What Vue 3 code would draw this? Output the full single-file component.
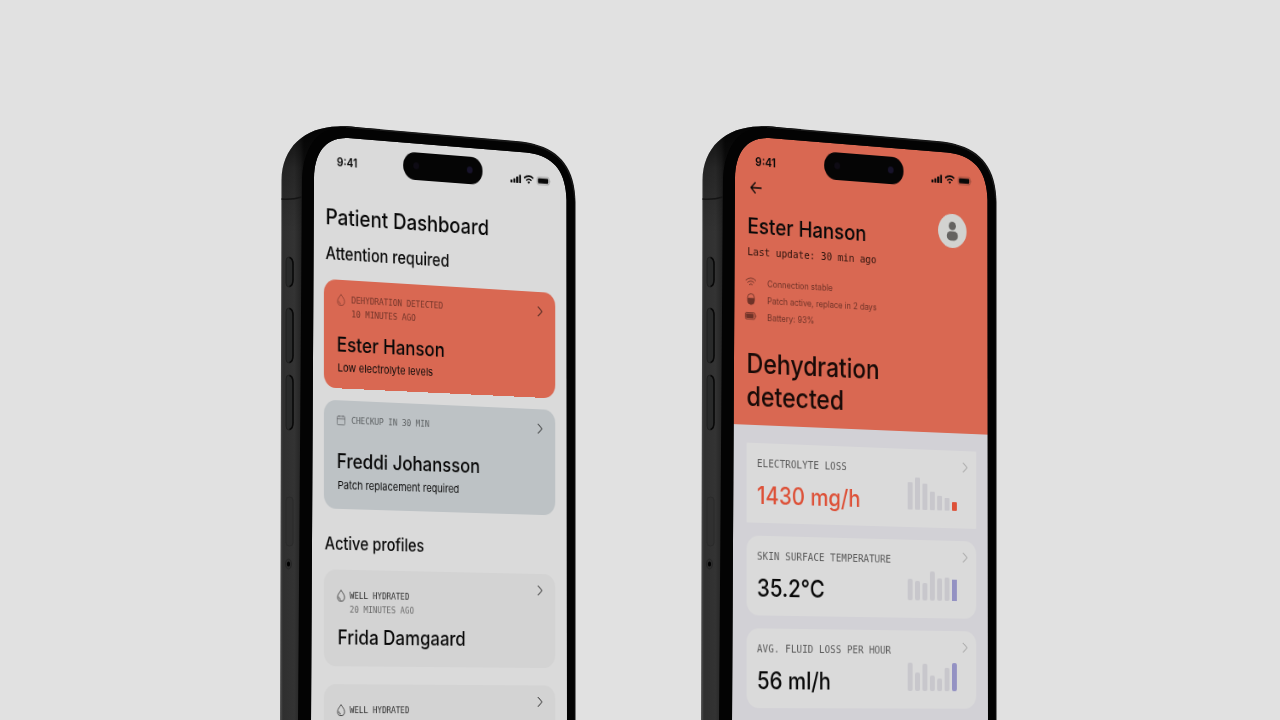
<script setup>
const profiles = {
  attention: [
    { kind: 'alert', icon: 'drop', label: 'DEHYDRATION DETECTED', time: '10 MINUTES AGO', name: 'Ester Hanson', note: 'Low electrolyte levels' },
    { kind: 'checkup', icon: 'calendar', label: 'CHECKUP IN 30 MIN', name: 'Freddi Johansson', note: 'Patch replacement required' }
  ],
  active: [
    { kind: 'calm', icon: 'drop', label: 'WELL HYDRATED', time: '20 MINUTES AGO', name: 'Frida Damgaard' },
    { kind: 'calm', icon: 'drop', label: 'WELL HYDRATED', time: '20 MINUTES AGO' }
  ]
}
const sections = [
  { title: 'Attention required', key: 'attention', items: profiles.attention },
  { title: 'Active profiles', key: 'active', items: profiles.active }
]
const metrics = [
  { label: 'ELECTROLYTE LOSS', value: '1430 mg/h', tone: 'warn', bars: [28, 33, 27, 19, 15, 13, 9] },
  { label: 'SKIN SURFACE TEMPERATURE', value: '35.2°C', tone: 'cool', bars: [22, 20, 18, 30, 23, 24, 22] },
  { label: 'AVG. FLUID LOSS PER HOUR', value: '56 ml/h', tone: 'cool round', bars: [29, 19, 28, 16, 13, 24, 29] }
]
const phones = ['dashboard', 'patient']
</script>

<template>
  <main class="stage">
    <section v-for="phone in phones" :key="phone" class="phone">
      <div class="screen" :class="phone">
        <div class="status-bar">
          <span class="clock">9:41</span>
          <span class="island"><i class="lens"></i><i class="lens bright"></i></span>
          <svg class="signals" viewBox="0 0 50 12" aria-hidden="true">
            <rect x="0" y="7" width="2.4" height="3" rx=".6" /><rect x="3.5" y="5.5" width="2.4" height="4.5" rx=".6" />
            <rect x="7" y="3.5" width="2.4" height="6.5" rx=".6" /><rect x="10.5" y="1.5" width="2.4" height="8.5" rx=".6" />
            <g fill="none" stroke="currentColor" stroke-width="1.6">
              <path d="M17 4.4a7.6 7.6 0 0 1 10.8 0" /><path d="M19.2 6.7a4.6 4.6 0 0 1 6.4 0" />
            </g>
            <path d="M20.7 8.3a2.6 2.6 0 0 1 3.4 0L22.4 10.200z" />
            <rect x="32.5" y="2.2" width="15" height="7.8" rx="2.2" fill="none" stroke="currentColor" stroke-width=".6" opacity=".4" />
            <rect x="33.7" y="3.4" width="12.6" height="5.4" rx="1.2" /><path d="M48.3 4.8q1.4 1.3 0 2.600z" opacity=".4" />
          </svg>
        </div>

        <div v-if="phone === 'dashboard'" class="dashboard-body">
          <h1>Patient Dashboard</h1>
          <section v-for="s in sections" :key="s.key" class="group" :class="s.key">
            <h2>{{ s.title }}</h2>
            <div class="list">
              <a v-for="(p, i) in s.items" :key="i" href="#" class="profile" :class="p.kind">
                <svg v-if="p.icon === 'drop'" class="tag-icon" viewBox="0 0 10 12" aria-hidden="true">
                  <path d="M5 .6C3.6 2.8 .9 5 .9 7.5a4.1 4.1 0 0 0 8.2 0C9.1 5 6.4 2.8 5 .6z" />
                  <path d="M2.6 7.4c0 1.4.8 2.3 2.1 2.5" />
                </svg>
                <svg v-else class="tag-icon" viewBox="0 0 10 12" aria-hidden="true">
                  <rect x=".5" y="2" width="9" height="8.5" rx="1" /><path d="M.5 4.6h9M2.8 1v2M7.2 1v2" />
                </svg>
                <span class="tag">{{ p.label }}</span>
                <svg class="chevron" viewBox="0 0 8 12" aria-hidden="true"><path d="M1.6 1l5 5-5 5" /></svg>
                <span v-if="p.time" class="time">{{ p.time }}</span>
                <strong v-if="p.name">{{ p.name }}</strong>
                <span v-if="p.note" class="note">{{ p.note }}</span>
              </a>
            </div>
          </section>
        </div>

        <template v-else>
          <header class="hero">
            <button class="back" type="button" aria-label="Back">
              <svg viewBox="0 0 14 12"><path d="M13.5 6H1.5M6.5 .6l-5.4 5.4 5.4 5.4" /></svg>
            </button>
            <div class="identity">
              <div>
                <h1>Ester Hanson</h1>
                <p class="updated">Last update: 30 min ago</p>
              </div>
              <svg class="avatar" viewBox="0 0 35 35" aria-hidden="true">
                <circle cx="17.5" cy="17.5" r="17.5" fill="#d2d2d0" />
                <circle cx="17.5" cy="12.4" r="4.4" fill="#656361" />
                <rect x="10.8" y="18" width="13.4" height="9.4" rx="4.5" fill="#656361" />
              </svg>
            </div>
            <ul class="facts">
              <li>
                <svg viewBox="0 0 14 12"><g class="line"><path d="M1 4.4a8.5 8.5 0 0 1 12 0" /><path d="M3 6.6a5.6 5.6 0 0 1 8 0" /><path d="M5 8.7a2.9 2.9 0 0 1 4 0" /></g></svg>
                Connection stable
              </li>
              <li>
                <svg viewBox="0 0 14 12"><rect class="line" x="3.3" y=".6" width="7.8" height="10.6" rx="3.7" /><path d="M3.3 4.8h7.8v2.7a3.9 3.7 0 0 1-7.8 0z" /></svg>
                Patch active, replace in 2 days
              </li>
              <li>
                <svg viewBox="0 0 14 12"><rect class="line" x=".4" y="2.6" width="11.6" height="6.4" rx="1.6" /><rect x="1.3" y="3.5" width="9" height="4.6" rx=".8" /><path d="M12.6 4.4q1.6 1.4 0 2.8z" /></svg>
                Battery: 93%
              </li>
            </ul>
            <p class="headline">Dehydration<br />detected</p>
          </header>
          <div class="metrics">
            <a v-for="m in metrics" :key="m.label" href="#" class="metric" :class="m.tone">
              <span class="metric-label">{{ m.label }}</span>
              <svg class="chevron" viewBox="0 0 8 12" aria-hidden="true"><path d="M1.6 1l5 5-5 5" /></svg>
              <strong>{{ m.value }}</strong>
              <span class="chart"><i v-for="(h, i) in m.bars" :key="i" :style="{ height: h + 'px' }"></i></span>
            </a>
          </div>
        </template>
      </div>

      <svg class="frame" viewBox="0 0 299 596" preserveAspectRatio="xMinYMin slice" aria-hidden="true">
        <defs>
          <linearGradient :id="'side-' + phone" x1="0" x2="24" y1="0" y2="0" gradientUnits="userSpaceOnUse">
            <stop offset="0" stop-color="#555" /><stop offset=".12" stop-color="#2f2f2f" />
            <stop offset=".6" stop-color="#333" /><stop offset=".85" stop-color="#252525" /><stop offset="1" stop-color="#111" />
          </linearGradient>
          <linearGradient :id="'shade-' + phone" x1="0" x2="0" y1="0" y2="110" gradientUnits="userSpaceOnUse">
            <stop offset="0" stop-color="#000" stop-opacity=".8" /><stop offset=".4" stop-color="#000" stop-opacity=".25" />
            <stop offset="1" stop-color="#000" stop-opacity="0" />
          </linearGradient>
        </defs>
        <g fill-rule="evenodd">
          <path :fill="'url(#side-' + phone + ')'" d="M0 600L1.5 56C2 24 24 3 58 2.5C64 2 72 2.5 80 3.5L236 17C274 20 295 38 295.5 78L295.5 600zM31 600L34 54C34.5 28 46 13 68 14L246 28.5C272 31 286 46 286.5 76L287 600z" />
          <path :fill="'url(#shade-' + phone + ')'" d="M1 110L1.5 56C2 24 24 3 58 2.5C64 2 72 2.5 80 3.5L100 5V14L68 14C46 13 34.5 28 34 54L34 110z" />
          <path fill="#030303" d="M18 600L22 56C23 26 36 4 60 4L80 5L236 19C272 22 294 38 294.5 78L294.5 600zM31 600L34 54C34.5 28 46 13 68 14L246 28.5C272 31 286 46 286.5 76L287 600z" />
        </g>
        <path d="M66 3.2L236 18C272 21 292 38 294.5 74" fill="none" stroke="#1b1b1b" stroke-width="1" />
        <path d="M1.5 75q10 1 20.500-2" stroke="#151515" stroke-width="1.5" fill="none" />
        <g fill="#292a2a" stroke="#1b1b1b" stroke-width=".7">
          <path d="M6 137q0-4 3-4 4 0 4 7v16q0 7-4 7-3 0-3-4z" />
          <path d="M6 188q0-4 3-4 4 0 4 7v41q0 7-4 7-3 0-3-4z" />
          <path d="M6 255q0-4 3-4 4 0 4 7v41q0 7-4 7-3 0-3-4z" />
        </g>
        <g fill="none" stroke="#080808" stroke-width="1.5">
          <path d="M9.5 133.5q3.5 1 3.5 7v15q0 6-3.5 7" /><path d="M9.5 184.5q3.5 1 3.5 7v40q0 6-3.5 7" /><path d="M9.5 251.5q3.5 1 3.5 7v40q0 6-3.5 7" />
        </g>
        <rect x="6" y="373" width="7" height="49" rx="3.5" fill="#303030" stroke="#2b2b2b" />
        <ellipse cx="8.5" cy="440" rx="3" ry="5" fill="#2d2d2d" stroke="#242424" stroke-width=".7" /><ellipse cx="8.5" cy="440" rx="1.6" ry="2.6" fill="#000" />
      </svg>
    </section>
  </main>
</template>

<style>
body { margin: 0; background: #e1e1e1; }
</style>

<style scoped>
* { box-sizing: border-box; }
h1, h2, p, ul { margin: 0; padding: 0; font-weight: 500; }
a { color: inherit; text-decoration: none; }
.stage {
  display: flex;
  justify-content: center;
  gap: 122px;
  height: 100vh;
  padding-top: 124px;
  overflow: hidden;
  background: #e1e1e1;
  color: #080808;
  font-family: Inter, "Liberation Sans", sans-serif;
}
.phone { position: relative; flex: 0 0 299px; padding-top: 8px; overflow: hidden; }
.frame { position: absolute; inset: 0; width: 100%; height: 100%; pointer-events: none; }

/* The display recedes to the right, seen from the level of its lower edge. */
.screen {
  width: 314px;
  height: 100%;
  margin-left: 30px;
  overflow: hidden;
  border-radius: 50px 50px 0 0;
  background: #dadada;
  transform-origin: 0 598px;
  transform: perspective(4250px) rotateY(30deg);
}
.screen.patient { background: #d2d1d6; }
.screen.patient .status-bar { background: #d96852; }
.screen.patient .clock { padding-left: 28px; }

.status-bar {
  display: grid;
  grid-template-columns: 109px 95px 1fr;
  align-items: center;
  height: 42px;
  padding-top: 9px;
}
.clock { padding: 5px 0 0 31px; font-size: 12px; font-weight: 600; line-height: 16px; }
.island {
  display: flex;
  justify-content: space-between;
  align-items: center;
  height: 28px;
  padding: 0 12px;
  border-radius: 14px;
  background: #050505;
}
.lens { width: 7px; height: 7px; border-radius: 50%; background: #0e0b14; }
.lens.bright { background: #17132a; }
.signals { width: 50px; height: 12px; margin: 10px 0 0 34px; fill: currentColor; }

.tag-icon, .chevron { fill: none; stroke: currentColor; }
.chevron { width: 8px; height: 12px; margin-top: 1px; stroke-width: 1; }

.dashboard-body { padding: 27px 21px 0 16px; }
.dashboard-body h1 { padding-left: 2px; font-size: 22px; line-height: 28px; }
.dashboard-body h2 { margin-bottom: 14px; padding-left: 2px; font-size: 17px; line-height: 24px; }
.group { margin-top: 11px; }
.group.active { margin-top: 23px; }
.active h2 { padding-left: 1px; }
.list { display: grid; gap: 12px; }
.active .list { gap: 18px; }
.profile {
  display: grid;
  grid-template-columns: 10px 1fr 8px;
  column-gap: 7px;
  align-content: start;
  min-height: 109px;
  padding: 13px 15px 8px;
  border-radius: 14px;
}
.tag-icon { width: 10px; height: 12px; stroke-width: .7; align-self: center; }
.tag, .time, .metric-label, .updated { font-family: "DejaVu Sans Mono", "Liberation Mono", monospace; }
.tag, .time { font-size: 9px; line-height: 14px; }
.time { grid-column: 2; }
.profile strong, .note { grid-column: 1 / -1; }
.profile strong { margin-top: 12px; font-size: 20px; font-weight: 500; line-height: 24px; }
.note { margin-top: 4px; padding-left: 1px; font-size: 11px; line-height: 14px; }
.alert { background: #d96852; }
.alert .tag, .alert .time, .alert .tag-icon { color: #713429; }
.checkup { background: #bdc2c5; }
.checkup .tag, .checkup .tag-icon { color: #5b5f61; }
.checkup strong { margin-top: 22px; }
.checkup .note { margin-top: 5px; }
.calm { column-gap: 5px; min-height: 97px; padding-top: 19px; background: #d3d3d3; }
.calm .tag { color: #2b2b2b; }
.calm .time { color: #6c6c6c; }
.calm strong { margin-top: 9px; padding-left: 1px; }
.calm .chevron { margin-top: -8px; }

.hero { padding: 6px 33px 12px 18px; background: #d96852; }
.back { display: block; width: 14px; height: 12px; margin-left: 4px; padding: 0; border: 0; background: none; color: inherit; }
.back svg { display: block; width: 14px; height: 12px; fill: none; stroke: currentColor; stroke-width: 1.4; }
.identity { display: flex; justify-content: space-between; margin-top: 18px; }
.hero h1 { padding-left: 1px; font-size: 22px; line-height: 28px; }
.updated { margin-top: 5px; padding-left: 1px; font-size: 11px; line-height: 16px; color: #2b120c; }
.avatar { width: 35px; height: 35px; margin-top: -12px; }
.facts { margin-top: 14px; list-style: none; color: #6f3328; font-size: 9px; font-weight: 400; line-height: 17px; }
.facts li { display: flex; align-items: center; gap: 12px; }
.facts svg { width: 14px; height: 12px; margin: -2px 0 0 -2px; fill: currentColor; }
.facts .line { fill: none; stroke: currentColor; stroke-width: .9; }
.headline { margin-top: 22px; font-size: 27px; line-height: 33px; color: #180a07; }

.metrics { display: grid; gap: 13px; padding: 18px 21px 18px 18px; }
.metric {
  display: grid;
  grid-template-columns: 1fr auto;
  row-gap: 11px;
  padding: 14px 10px 13px 12px;
  border-radius: 14px;
  background: #dadada;
}
.metric.warn { border-radius: 1px; }
.metric-label { font-size: 11px; line-height: 14px; color: #5c5c5c; white-space: nowrap; }
.metric .chevron { margin-top: -3px; justify-self: end; color: #929292; }
.metric strong { font-size: 24px; font-weight: 500; line-height: 28px; }
.metric.warn strong { color: #dd5138; }
.chart { display: flex; align-items: flex-end; gap: 3px; height: 23px; margin-right: 14px; }
.chart i { width: 6px; border-radius: 2px; background: #c8c7cc; }
.cool .chart i:last-child { border-radius: 0; background: #9492c3; }
.round .chart i:last-child { border-radius: 2px; }
.warn .chart i { border-radius: 1px; }
.warn .chart i:last-child { background: #dd5138; }
</style>
